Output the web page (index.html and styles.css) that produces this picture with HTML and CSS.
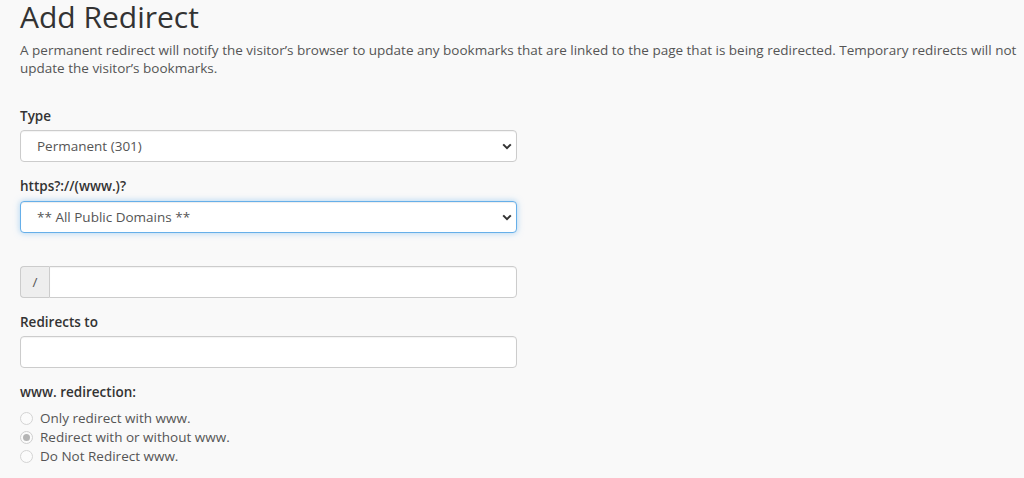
FILE: index.html
```html
<!DOCTYPE html>
<html lang="en">
<head>
<meta charset="utf-8">
<title>Add Redirect</title>
<link rel="stylesheet" href="styles.css">
</head>
<body>
<div class="page">
  <h1 class="title">Add Redirect</h1>
  <p class="desc">A permanent redirect will notify the visitor’s browser to update any bookmarks that are linked to the page that is being redirected. Temporary redirects will not update the visitor’s bookmarks.</p>

  <form class="form">
    <div class="form-group">
      <label class="label">Type</label>
      <div class="select-wrap">
        <div class="control select">Permanent (301)</div>
        <svg class="chev" width="10" height="7" viewBox="0 0 10 7"><path d="M1.2 1.4 L5 5.2 L8.8 1.4" fill="none" stroke="#333" stroke-width="2"/></svg>
      </div>
    </div>

    <div class="form-group">
      <label class="label">https?://(www.)?</label>
      <div class="select-wrap">
        <div class="control select focus">** All Public Domains **</div>
        <svg class="chev" width="10" height="7" viewBox="0 0 10 7"><path d="M1.2 1.4 L5 5.2 L8.8 1.4" fill="none" stroke="#333" stroke-width="2"/></svg>
      </div>
    </div>

    <div class="form-group spaced">
      <div class="input-group">
        <span class="addon">/</span>
        <div class="control input joined"></div>
      </div>
    </div>

    <div class="form-group">
      <label class="label">Redirects to</label>
      <div class="control input"></div>
    </div>

    <div class="form-group">
      <label class="label">www. redirection:</label>
      <div class="radios">
        <div class="radio"><span class="dot"></span><span>Only redirect with www.</span></div>
        <div class="radio"><span class="dot checked"></span><span>Redirect with or without www.</span></div>
        <div class="radio"><span class="dot"></span><span>Do Not Redirect www.</span></div>
      </div>
    </div>
  </form>
</div>
</body>
</html>
```

FILE: styles.css
```css
html, body {
  margin: 0;
  padding: 0;
  background: #f9f9f9;
}
body {
  font-family: "Open Sans", "DejaVu Sans", sans-serif;
  font-size: 13.5px;
  line-height: 1.42857;
  color: #333;
}
.page {
  padding: 0 0 0 20px;
}
.title {
  margin: 0;
  font-size: 30px;
  font-weight: 400;
  line-height: 33px;
  color: #333;
}
.desc {
  margin: 9px 0 0;
  color: #555;
  line-height: 17.5px;
}
.form {
  width: 497px;
  margin-top: 30px;
}
.form-group {
  margin-bottom: 15px;
}
.form-group.spaced {
  padding-top: 18px;
}
.label {
  display: block;
  font-weight: 600;
  margin-bottom: 4px;
  color: #333;
}
.select-wrap {
  position: relative;
}
.control {
  box-sizing: border-box;
  height: 32px;
  background: #fff;
  border: 1px solid #ccc;
  border-radius: 4px;
  box-shadow: inset 0 1px 1px rgba(0,0,0,.05);
  color: #555;
  line-height: 30px;
}
.select {
  padding-left: 16px;
}
.focus {
  border-color: #66afe9;
  box-shadow: inset 0 1px 1px rgba(0,0,0,.075), 0 0 6px rgba(102,175,233,.55);
}
.chev {
  position: absolute;
  right: 5px;
  top: 13px;
}
.input-group {
  display: flex;
}
.addon {
  box-sizing: border-box;
  width: 29px;
  height: 32px;
  line-height: 30px;
  text-align: center;
  background: #eee;
  border: 1px solid #ccc;
  border-right: 0;
  border-radius: 4px 0 0 4px;
  color: #555;
}
.joined {
  flex: 1;
  border-radius: 0 4px 4px 0;
}
.radios {
  margin-top: 7px;
}
.radio {
  display: flex;
  align-items: center;
  height: 19px;
  color: #555;
}
.dot {
  box-sizing: border-box;
  width: 13px;
  height: 13px;
  border-radius: 50%;
  border: 1px solid #d4d4d4;
  background: #fbfbfb;
  margin-right: 7px;
  position: relative;
}
.dot.checked {
  border-color: #cfcfcf;
}
.dot.checked::after {
  content: "";
  position: absolute;
  left: 2px;
  top: 2px;
  width: 7px;
  height: 7px;
  border-radius: 50%;
  background: #b5b5b5;
}
```
